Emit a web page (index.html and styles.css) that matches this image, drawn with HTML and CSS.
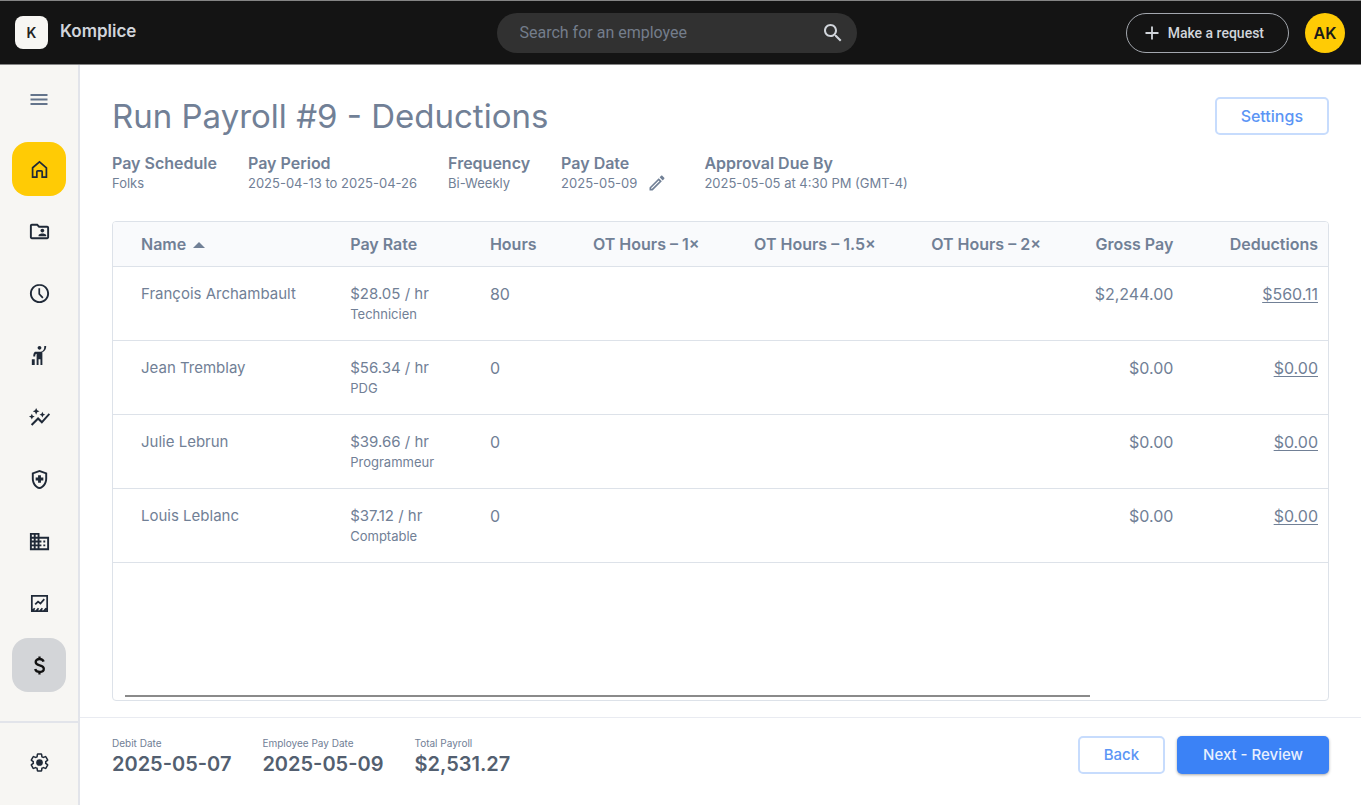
FILE: index.html
```html
<!DOCTYPE html>
<html lang="en">
<head>
<meta charset="utf-8">
<title>Komplice - Run Payroll</title>
<link rel="stylesheet" href="styles.css">
</head>
<body>
<div class="app">
  <header class="topbar">
    <div class="brand"><span class="brand-mark">K</span><span class="brand-name">Komplice</span></div>
    <form class="search" role="search">
      <input class="search-input" type="text" placeholder="Search for an employee" aria-label="Search for an employee">
      <button class="icon-button search-button" type="button" aria-label="Search">
        <svg class="icon icon-large" viewBox="0 0 24 24"><path d="M15.5 14h-.79l-.28-.27C15.41 12.59 16 11.11 16 9.5 16 5.91 13.09 3 9.5 3S3 5.91 3 9.5 5.91 16 9.5 16c1.61 0 3.09-.59 4.23-1.57l.27.28v.79l5 4.99L20.49 19l-4.99-5zm-6 0C7.01 14 5 11.99 5 9.5S7.01 5 9.5 5 14 7.01 14 9.5 11.99 14 9.5 14z"/></svg>
      </button>
    </form>
    <div class="account">
      <button class="request" type="button">
        <svg class="icon" viewBox="0 0 20 20"><path class="line" d="M10 3.500v13M3.500 10h13"/></svg>
        Make a request
      </button>
      <button class="avatar" type="button" aria-label="Account AK">AK</button>
    </div>
  </header>

  <div class="body">
    <nav class="sidebar" aria-label="Main">
      <button class="menu-toggle" type="button" aria-label="Toggle menu">
        <svg class="icon" viewBox="0 0 20 20"><path class="line" d="M1.500 6h17M1.500 10.500h17M1.500 15h17"/></svg>
      </button>
      <div class="nav-list">
        <a class="nav-item home" href="#" aria-label="Home"><svg class="icon" viewBox="0 0 24 24"><path class="line" d="M4.800 10.200 12 4l7.200 6.200V20h-4.400v-5.600a1 1 0 0 0-1-1h-3.600a1 1 0 0 0-1 1V20H4.800z"/></svg></a>
        <a class="nav-item" href="#" aria-label="Employee files"><svg class="icon" viewBox="0 0 24 24"><path d="M20 6h-8l-2-2H4c-1.100 0-2 .9-2 2v12c0 1.100.9 2 2 2h16c1.100 0 2-.9 2-2V8c0-1.100-.9-2-2-2zm0 12H4V6h5.170l2 2H20v10z"/><path d="M15 13c1.100 0 2-.9 2-2s-.9-2-2-2-2 .9-2 2 .9 2 2 2zm-4 4h8v-1c0-1.330-2.670-2-4-2s-4 .67-4 2v1z"/></svg></a>
        <a class="nav-item" href="#" aria-label="Time"><svg class="icon" viewBox="0 0 24 24"><path d="M12 2C6.480 2 2 6.480 2 12s4.470 10 9.990 10C17.520 22 22 17.520 22 12S17.520 2 11.990 2zM12 20c-4.420 0-8-3.580-8-8s3.580-8 8-8 8 3.580 8 8-3.580 8-8 8z"/><path class="line" d="M11.750 6.500v6l3.750 4"/></svg></a>
        <a class="nav-item" href="#" aria-label="Leave"><svg class="icon" viewBox="0 0 24 24"><path d="M12 6c-1.100 0-2-.9-2-2s.9-2 2-2 2 .9 2 2-.9 2-2 2zM17 2h2c0 2.700-.93 4.410-2.300 5.500-.5.4-1.100.7-1.700.9V22h-2v-6h-2v6H9V10.100c-.3.1-.5.2-.6.3-.53.410-.9.830-.9 2.600h-2c0-2.060.35-3.780 1.700-4.900C8.210 8.270 10 8 12 8s2.680-.46 3.480-1.060C15.960 6.550 17 5.760 17 2zM4 16h3v6H4v-6z"/></svg></a>
        <a class="nav-item" href="#" aria-label="Performance"><svg class="icon" viewBox="0 0 24 24"><path d="M14.060 9.940 12 9l2.060-.94L15 6l.94 2.060L18 9l-2.060.94L15 12l-.94-2.060zM4 14l.94-2.060L7 11l-2.060-.94L4 8l-.94 2.060L1 11l2.060.94L4 14zM8.500 9l1.090-2.410L12 5.500 9.590 4.410 8.500 2 7.410 4.410 5 5.500l2.410 1.090L8.500 9zM4.500 20.500l6-6.010 4 4L23 8.930l-1.410-1.410-7.090 7.970-4-4L3 19l1.500 1.500z"/></svg></a>
        <a class="nav-item" href="#" aria-label="Benefits"><svg class="icon" viewBox="0 0 24 24"><path d="M10.500 13H8v-3h2.500V7.500h3V10H16v3h-2.500v2.500h-3V13zM12 2 4 5v6.090c0 5.050 3.410 9.760 8 10.910 4.590-1.150 8-5.860 8-10.910V5l-8-3zm6 9.090c0 4-2.550 7.700-6 8.830-3.450-1.130-6-4.820-6-8.830v-4.700l6-2.250 6 2.250v4.700z"/></svg></a>
        <a class="nav-item" href="#" aria-label="Company"><svg class="icon" viewBox="0 0 24 24"><path d="M12 7V3H2v18h20V7H12zM6 19H4v-2h2v2zm0-4H4v-2h2v2zm0-4H4V9h2v2zm0-4H4V5h2v2zm4 12H8v-2h2v2zm0-4H8v-2h2v2zm0-4H8V9h2v2zm0-4H8V5h2v2zm10 12h-8v-2h2v-2h-2v-2h2v-2h-2V9h8v10zm-2-8h-2v2h2v-2zm0 4h-2v2h2v-2z"/></svg></a>
        <a class="nav-item" href="#" aria-label="Reports"><svg class="icon" viewBox="0 0 24 24"><path class="line" d="M4 4h16v16H4zM7.500 13l3-3 2.500 2 4-4.500M4.500 20l2.500-3M8.500 20l2.500-3M12.500 20l2.500-3M16.500 20l2.500-3"/></svg></a>
        <a class="nav-item current" href="#" aria-label="Payroll" aria-current="page"><svg class="icon" viewBox="0 0 24 24"><path class="line bold" d="M16.300 8C15.700 6 14.200 5.200 12 5.200c-2.500 0-4 1.300-4 3.100 0 2.200 1.900 2.900 4.200 3.500 2.600.7 4.300 1.500 4.300 3.700 0 2.100-1.700 3.300-4.300 3.300-2.500 0-4.200-1.100-4.700-3.100M12 2.500v3M12 18.500v3"/></svg></a>
      </div>
      <div class="nav-foot">
        <a class="nav-item" href="#" aria-label="Settings"><svg class="icon" viewBox="0 0 24 24"><path class="line" d="M19.430 12.980c.04-.32.07-.64.07-.98s-.03-.66-.07-.98l2.110-1.650c.19-.15.24-.42.12-.64l-2-3.460c-.12-.22-.39-.3-.61-.22l-2.490 1c-.52-.4-1.080-.73-1.690-.98l-.38-2.650C14.460 2.180 14.250 2 14 2h-4c-.25 0-.46.18-.49.42l-.38 2.650c-.61.25-1.170.59-1.690.98l-2.490-1c-.23-.09-.49 0-.61.22l-2 3.460c-.13.22-.07.49.12.64l2.110 1.650c-.04.32-.07.65-.07.98s.03.66.07.98l-2.110 1.650c-.19.15-.24.42-.12.64l2 3.460c.12.22.39.3.61.22l2.490-1c.52.4 1.080.73 1.690.98l.38 2.650c.03.24.24.42.49.42h4c.25 0 .46-.18.49-.42l.38-2.650c.61-.25 1.170-.59 1.690-.98l2.490 1c.23.09.49 0 .61-.22l2-3.460c.12-.22.07-.49-.12-.64l-2.110-1.650z" transform="translate(1.500 1.500) scale(.875)"/><circle cx="12" cy="12" r="3.500"/></svg></a>
      </div>
    </nav>

    <div class="page">
      <main class="content">
        <div class="title-row">
          <h1 class="title">Run Payroll #9 - Deductions</h1>
          <button class="button outline" type="button">Settings</button>
        </div>
        <dl class="facts">
          <div><dt>Pay Schedule</dt><dd>Folks</dd></div>
          <div><dt>Pay Period</dt><dd>2025-04-13 to 2025-04-26</dd></div>
          <div><dt>Frequency</dt><dd>Bi-Weekly</dd></div>
          <div class="fact-date"><dt>Pay Date</dt><dd>2025-05-09
            <button class="icon-button" type="button" aria-label="Edit pay date"><svg class="icon" viewBox="0 0 24 24"><path d="M14.060 9.020l.92.92L5.920 19H5v-.92l9.060-9.060M17.660 3c-.25 0-.51.1-.7.290l-1.830 1.830 3.750 3.750 1.830-1.830c.39-.39.39-1.020 0-1.410l-2.340-2.340c-.2-.2-.45-.29-.71-.29zm-3.600 3.190L3 17.250V21h3.750L17.810 9.940l-3.750-3.750z"/></svg></button></dd></div>
          <div><dt>Approval Due By</dt><dd>2025-05-05 at 4:30 PM (GMT-4)</dd></div>
        </dl>

        <div class="table-card">
          <table class="payroll">
            <colgroup><col class="c-name"><col class="c-rate"><col class="c-hours"><col class="c-ot1"><col class="c-ot15"><col class="c-ot2"><col class="c-gross"><col class="c-ded"></colgroup>
            <thead>
              <tr><th aria-sort="ascending">Name <span class="sort"></span></th><th>Pay Rate</th><th>Hours</th><th class="num">OT Hours – 1×</th><th class="num">OT Hours – 1.5×</th><th class="num">OT Hours – 2×</th><th class="num">Gross Pay</th><th class="num">Deductions</th></tr>
            </thead>
            <tbody>
              <tr><td>François Archambault</td><td>$28.05 / hr<small>Technicien</small></td><td class="amount">80</td><td></td><td></td><td></td><td class="num amount">$2,244.00</td><td class="num amount"><a href="#">$560.11</a></td></tr>
              <tr><td>Jean Tremblay</td><td>$56.34 / hr<small>PDG</small></td><td class="amount">0</td><td></td><td></td><td></td><td class="num amount">$0.00</td><td class="num amount"><a href="#">$0.00</a></td></tr>
              <tr><td>Julie Lebrun</td><td>$39.66 / hr<small>Programmeur</small></td><td class="amount">0</td><td></td><td></td><td></td><td class="num amount">$0.00</td><td class="num amount"><a href="#">$0.00</a></td></tr>
              <tr><td>Louis Leblanc</td><td>$37.12 / hr<small>Comptable</small></td><td class="amount">0</td><td></td><td></td><td></td><td class="num amount">$0.00</td><td class="num amount"><a href="#">$0.00</a></td></tr>
            </tbody>
          </table>
          <div class="scroll-track"><div class="scroll-thumb"></div></div>
        </div>
      </main>

      <footer class="summary">
        <dl class="totals">
          <div><dt>Debit Date</dt><dd>2025-05-07</dd></div>
          <div><dt>Employee Pay Date</dt><dd>2025-05-09</dd></div>
          <div><dt>Total Payroll</dt><dd>$2,531.27</dd></div>
        </dl>
        <div class="actions">
          <button class="button outline" type="button">Back</button>
          <button class="button primary" type="button">Next - Review</button>
        </div>
      </footer>
    </div>
  </div>
</div>
</body>
</html>
```
FILE: styles.css
```css
* { box-sizing: border-box; }

body {
  margin: 0;
  background: #fff;
  color: #718096;
  font-family: Inter, Roboto, sans-serif;
  font-size: 15px;
  line-height: 20px;
}

button, input { font: inherit; color: inherit; }
button { cursor: pointer; }
dl, dd, h1 { margin: 0; }

.app {
  display: flex;
  flex-direction: column;
  min-height: 100vh;
  padding-bottom: 7px;
}

.icon { display: block; width: 20px; height: 20px; fill: currentColor; }
.icon-large { width: 24px; height: 24px; }
.line { fill: none; stroke: currentColor; stroke-width: 1.8; }
.bold { stroke-width: 2.4; }
.icon-button { padding: 0; border: 0; background: none; }

/* Top bar */
.topbar {
  display: grid;
  grid-template-columns: 1fr minmax(200px, 360px) 1fr;
  align-items: center;
  height: 65px;
  padding: 0 16px 0 8px;
  background: #141414;
  border-top: 1px solid #858585;
  border-bottom: 1px solid #858585;
  color: #d1d5db;
}
.brand { display: flex; align-items: center; gap: 12px; padding-left: 7px; }
.brand-mark {
  display: grid;
  place-items: center;
  width: 33px;
  height: 33px;
  border-radius: 8px;
  background: #f7f6f3;
  color: #222;
  font-size: 14px;
  font-weight: 600;
}
.brand-name { padding-bottom: 4px; font-size: 17px; font-weight: 600; }
.search {
  display: flex;
  align-items: center;
  height: 40px;
  padding: 0 12px 0 23px;
  border-radius: 20px;
  background: #313131;
  font-family: Roboto, sans-serif;
  font-size: 16px;
}
.search-input { flex: 1; min-width: 0; padding: 0; border: 0; outline: 0; background: none; }
.search-input::placeholder { color: #747d8b; opacity: 1; }
.account { display: flex; justify-content: flex-end; gap: 16px; }
.request {
  display: flex;
  align-items: center;
  gap: 6px;
  height: 40px;
  padding: 0 24px 0 15px;
  border: 1px solid #a3a7ae;
  border-radius: 20px;
  background: none;
  font-family: Roboto, sans-serif;
  font-size: 14px;
  font-weight: 500;
}
.avatar {
  width: 40px;
  height: 40px;
  padding: 0;
  border: 0;
  border-radius: 50%;
  background: #ffcb05;
  color: #1a1a1a;
  font-size: 16px;
  font-weight: 600;
}

/* Sidebar */
.body { display: flex; flex: 1; }
.sidebar {
  display: flex;
  flex-direction: column;
  flex: none;
  width: 80px;
  background: #f7f6f3;
  border-right: 2px solid #e2e4ea;
  color: #1f2937;
}
.menu-toggle {
  align-self: center;
  margin: 24px 0 33px;
  padding: 0;
  border: 0;
  background: none;
  color: #64748b;
}
.nav-list { display: flex; flex-direction: column; align-items: center; gap: 8px; }
.nav-item {
  display: grid;
  place-items: center;
  width: 54px;
  height: 54px;
  border-radius: 16px;
  color: inherit;
}
.nav-item .icon { width: 23px; height: 23px; }
.home { background: #ffcb05; }
.current { background: #d3d5d8; color: #111; }
.nav-foot {
  display: flex;
  justify-content: center;
  margin-top: auto;
  padding: 12px 0 16px;
  border-top: 2px solid #e2e4ea;
}

/* Page */
.page { display: flex; flex: 1; flex-direction: column; min-width: 0; }
.content { display: flex; flex: 1; flex-direction: column; padding: 31px 32px 16px; }
.title-row { display: flex; align-items: center; justify-content: space-between; }
.title { font-size: 33px; font-weight: 400; line-height: 40px; }
.button {
  height: 38px;
  padding: 0 24px;
  border: 2px solid transparent;
  border-radius: 5px;
  font-size: 16px;
  font-weight: 500;
}
.outline { background: #fff; border-color: #c7dcfd; color: #5b95f5; }
.primary {
  background: #3b82f6;
  color: #e8f0fe;
  box-shadow: 0 1px 3px rgba(0, 0, 0, 0.35);
}
.facts { display: flex; gap: 31px; padding: 17px 0 28px; }
.facts dt { font-size: 16px; font-weight: 600; line-height: 20px; }
.facts dd { display: flex; gap: 10px; font-size: 13px; line-height: 20px; }
.fact-date { padding-right: 6px; }

/* Table */
.table-card {
  display: flex;
  flex: 1;
  flex-direction: column;
  overflow: hidden;
  border: 1px solid #dde2e9;
  border-radius: 4px;
}
.payroll { width: 100%; border-collapse: collapse; table-layout: fixed; }
.c-name { width: 18.7%; }
.c-rate { width: 11.5%; }
.c-hours { width: 5.4%; }
.c-ot1 { width: 13.5%; }
.c-ot15 { width: 14.5%; }
.c-ot2 { width: 13.6%; }
.c-gross { width: 10.9%; }
.c-ded { width: 11.9%; }
.payroll th {
  height: 44px;
  padding: 0 0 0 10px;
  background: #f9fafc;
  font-size: 16px;
  font-weight: 600;
  text-align: left;
  white-space: nowrap;
}
.payroll td { height: 74px; padding: 17px 0 0 10px; vertical-align: top; }
.payroll tr { border-bottom: 1px solid #dde2e9; }
.payroll th:first-child, .payroll td:first-child { padding-left: 28px; }
.payroll .num { padding-right: 10px; text-align: right; }
.payroll .amount { font-size: 16px; }
.payroll small { display: block; font-size: 13px; line-height: 21px; }
.payroll a { color: inherit; text-underline-offset: 2px; }
.sort {
  display: inline-block;
  margin-left: 3px;
  border: 6px solid transparent;
  border-top: 0;
  border-bottom-color: currentColor;
  vertical-align: middle;
}
.scroll-track { margin-top: auto; padding: 0 12px 3px; }
.scroll-thumb { width: 81%; height: 2px; background: #8a8a8a; }

/* Footer */
.summary {
  display: flex;
  justify-content: space-between;
  padding: 18px 32px 27px;
  border-top: 1px solid #e9ebf1;
}
.totals { display: flex; gap: 31px; }
.totals dt { font-size: 10px; line-height: 14px; }
.totals dd { color: #535f70; font-size: 20px; font-weight: 600; line-height: 28px; }
.actions { display: flex; gap: 12px; }
.actions .button { font-size: 15px; }
```
